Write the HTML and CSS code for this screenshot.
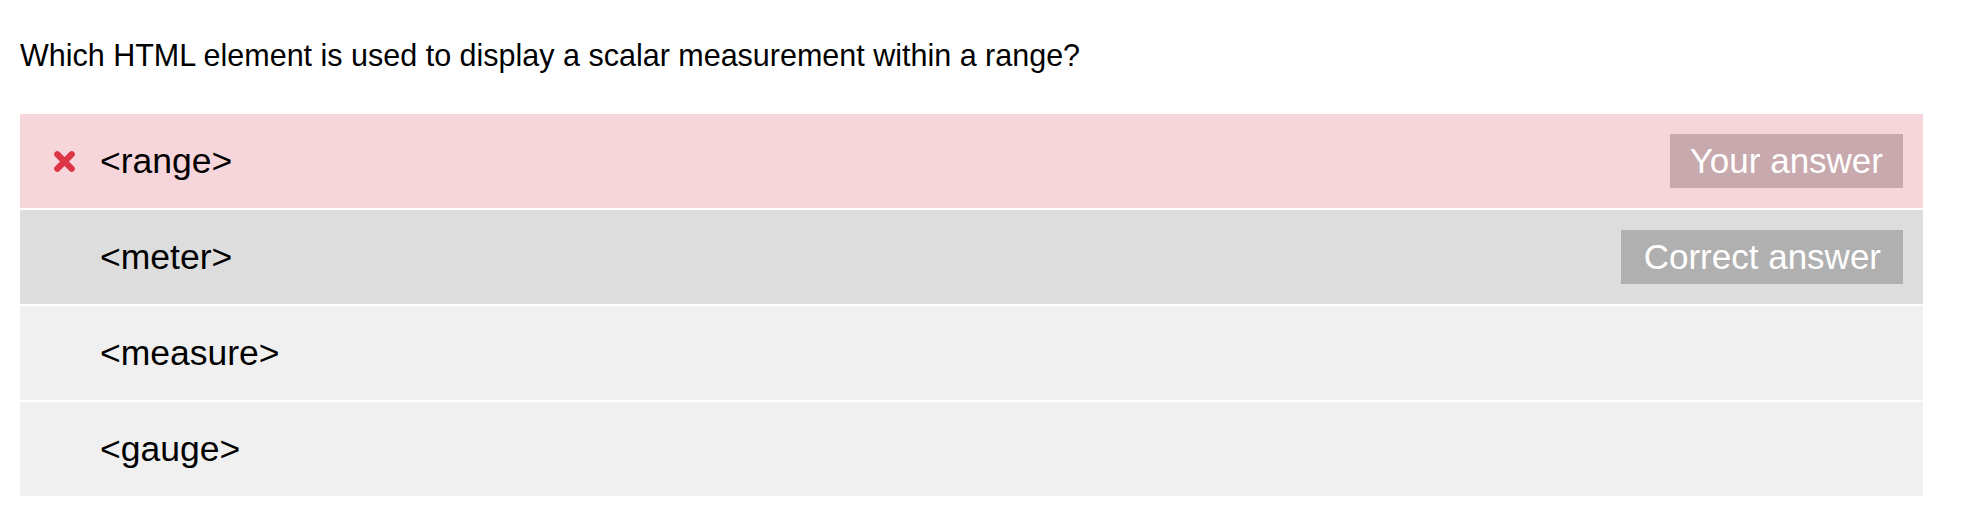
FILE: index.html
```html
<!DOCTYPE html>
<html>
<head>
<meta charset="utf-8">
<link rel="stylesheet" href="styles.css">
</head>
<body>
<div class="quiz">
  <p class="question">Which HTML element is used to display a scalar measurement within a range?</p>
  <ul class="options">
    <li class="option wrong">
      <span class="marker">
        <svg viewBox="0 0 24 24" width="23" height="23"><path d="M4.5 4.5 L19.5 19.5 M19.5 4.5 L4.5 19.5" stroke="#dc3545" stroke-width="6.5" stroke-linecap="round" fill="none"/></svg>
      </span>
      <span class="label">&lt;range&gt;</span>
      <span class="badge badge-yours">Your answer</span>
    </li>
    <li class="option correct">
      <span class="marker"></span>
      <span class="label">&lt;meter&gt;</span>
      <span class="badge badge-correct">Correct answer</span>
    </li>
    <li class="option">
      <span class="marker"></span>
      <span class="label">&lt;measure&gt;</span>
    </li>
    <li class="option">
      <span class="marker"></span>
      <span class="label">&lt;gauge&gt;</span>
    </li>
  </ul>
</div>
</body>
</html>
```

FILE: styles.css
```css
html, body {
  margin: 0;
  padding: 0;
  background: #ffffff;
}
body {
  font-family: "Liberation Sans", Arial, sans-serif;
  color: #000000;
}
.quiz {
  padding: 0 45px 0 20px;
}
.question {
  margin: 0;
  padding: 38px 0 42px 0;
  font-size: 30.5px;
  line-height: 34px;
}
.options {
  list-style: none;
  margin: 0;
  padding: 0;
  display: flex;
  flex-direction: column;
  gap: 2px;
}
.option {
  display: flex;
  align-items: center;
  min-height: 54px;
  padding: 20px 20px 20px 33px;
  background: #f0f0f0;
  font-size: 35.5px;
}
.option.wrong {
  background: #f7d6db;
}
.option.correct {
  background: #dddddd;
}
.marker {
  width: 23px;
  height: 23px;
  margin-right: 24px;
  display: flex;
  flex: none;
}
.label {
  flex: 1;
}
.badge {
  color: #ffffff;
  font-size: 35px;
  line-height: 54px;
  height: 54px;
  padding: 0 20px;
}
.badge-yours {
  background: #c8a9ad;
}
.badge-correct {
  background: #b0b0b0;
  padding: 0 22px 0 23px;
}
```
